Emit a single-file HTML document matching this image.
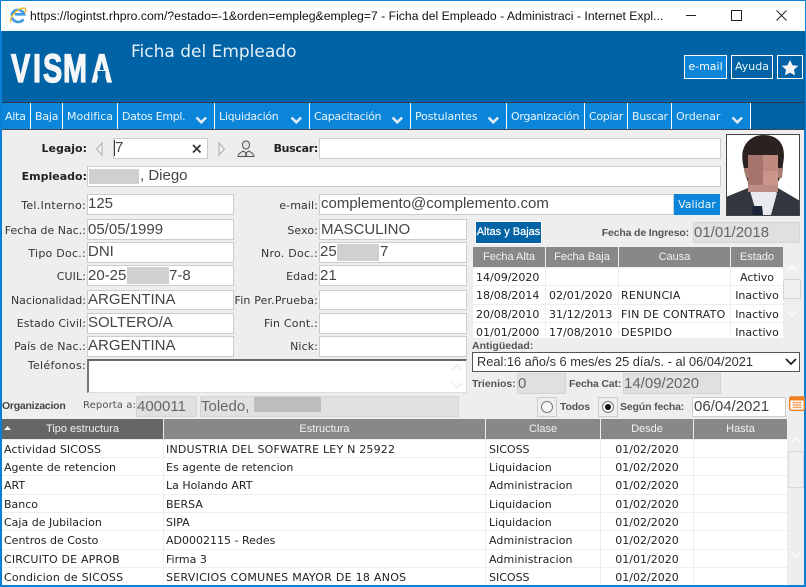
<!DOCTYPE html>
<html lang="es"><head><meta charset="utf-8"><title>Ficha del Empleado</title>
<style>
html,body{margin:0;padding:0;width:806px;height:587px;overflow:hidden;background:#eee}
body{position:relative;font:11px "DejaVu Sans",sans-serif;color:#222}
div,span,svg{position:absolute;box-sizing:border-box;white-space:nowrap}
.n{top:104px;height:26px;line-height:25px;color:#e8f4fc;font-size:11px;text-align:left;letter-spacing:-.2px}
.s{top:103px;width:1px;height:26px;background:#fff}
.l{text-align:right;line-height:16px;height:16px;color:#333}
.l:not(.b){margin-left:-1px;margin-top:1px;letter-spacing:.1px}
.b{font-weight:bold;color:#222}
.t{font:bold 10.5px/16px "Liberation Sans",sans-serif;color:#555;height:16px;letter-spacing:-.15px}
.f{background:#fff;border:1px solid #ccc;font:15px "Liberation Sans",sans-serif;color:#444;line-height:17px;padding-left:0;overflow:hidden}
.h{line-height:19px}
.o{line-height:18px}
.g{background:#e0e0e0;color:#666;border-color:#d4d4d4;line-height:19px}
.bl{background:#d0d0d0}
.th{background:#888;color:#f2f2f2;text-align:center;line-height:20px;height:20px;font:11px/20px "Liberation Sans",sans-serif}
.c{background:#fff;line-height:19px;color:#222;font-size:11px;overflow:hidden}
.u{letter-spacing:.27px}
</style></head><body>
<!-- window frame -->
<div style="left:0;top:0;width:806px;height:31px;background:#fff;border-top:1px solid #0a7fd6"></div>
<svg style="left:9px;top:7px" width="18" height="17" viewBox="0 0 18 17"><path d="M2.500 8.500a6.500 6.500 0 0 1 12.600-1.200H6M3 10.500a6.500 6.500 0 0 0 11.500 1.700" fill="none" stroke="#3d9be0" stroke-width="2.600"/><path d="M2 15.500C0 12 5 5 10 2.500 13 1 17 0 16.800 3c-.1 1-.6 2-1.300 3" fill="none" stroke="#eeb32d" stroke-width="1.300"/></svg>
<span style="left:30px;top:8px;font:12.2px/16px 'Liberation Sans',sans-serif;color:#111;letter-spacing:.02px">https://logintst.rhpro.com/?estado=-1&amp;orden=empleg&amp;empleg=7 - Ficha del Empleado - Administraci - Internet Expl...</span>
<div style="left:686px;top:15px;width:10px;height:1px;background:#222"></div>
<div style="left:731px;top:10px;width:11px;height:11px;border:1px solid #222"></div>
<svg style="left:776px;top:10px" width="11" height="11"><path d="M.5 .5l10 10M10.500 .5l-10 10" stroke="#222" fill="none"/></svg>
<!-- header -->
<div style="left:0;top:31px;width:806px;height:71px;background:#0063a6"></div>
<svg style="left:10px;top:50px" width="104" height="36"><g transform="scale(.72 1)"><text x="1.400 32 45.800 73.600 113" y="32" font-family="Liberation Sans" font-weight="bold" font-size="40" fill="#f4f6f8" stroke="#f4f6f8" stroke-width="1.300">VISMA</text></g><rect x="87.500" y="21" width="8" height="5" fill="#0063a6"/></svg>
<span style="left:131px;top:42px;font-size:17px;line-height:21px;color:#e6f0f8">Ficha del Empleado</span>
<div style="left:684px;top:55px;width:43px;height:24px;background:#0a85d9;border:1px solid #fff;color:#fff;text-align:center;line-height:21px">e-mail</div>
<div style="left:731px;top:55px;width:42px;height:24px;border:1px solid #fff;color:#eaf4fb;text-align:center;line-height:21px">Ayuda</div>
<div style="left:777px;top:55px;width:26px;height:24px;border:1px solid #fff"></div>
<svg style="left:781px;top:59px" width="18" height="17" viewBox="0 0 18 17"><path d="M9 1l2.500 5.200 5.700.7-4.200 3.900 1.100 5.600L9 13.600l-5.100 2.800L5 10.800.8 6.900l5.700-.7z" fill="#f4f4f4"/></svg>
<!-- nav -->
<div style="left:0;top:102px;width:806px;height:1px;background:#2b3a44"></div>
<div style="left:0;top:103px;width:750px;height:26px;background:#0a85d9"></div>
<div style="left:750px;top:103px;width:56px;height:26px;background:#0063a6"></div>
<div style="left:0;top:129px;width:806px;height:1px;background:#3a4a55"></div>
<span class="n" style="left:5px">Alta</span><div class="s" style="left:30px"></div>
<span class="n" style="left:35px">Baja</span><div class="s" style="left:62px"></div>
<span class="n" style="left:67px;letter-spacing:0">Modifica</span><div class="s" style="left:117px"></div>
<span class="n" style="left:122px;letter-spacing:-.3px">Datos Empl.</span><div class="s" style="left:214px"></div>
<span class="n" style="left:219px;letter-spacing:-.3px">Liquidación</span><div class="s" style="left:309px"></div>
<span class="n" style="left:314px;letter-spacing:-.33px">Capacitación</span><div class="s" style="left:410px"></div>
<span class="n" style="left:415px;letter-spacing:-.1px">Postulantes</span><div class="s" style="left:506px"></div>
<span class="n" style="left:511px;letter-spacing:-.33px">Organización</span><div class="s" style="left:584px"></div>
<span class="n" style="left:589px;letter-spacing:-.3px">Copiar</span><div class="s" style="left:627px"></div>
<span class="n" style="left:632px;letter-spacing:-.3px">Buscar</span><div class="s" style="left:671px"></div>
<span class="n" style="left:676px;letter-spacing:-.1px">Ordenar</span><div class="s" style="left:750px"></div>
<svg style="left:0;top:104px" width="806" height="26" fill="none" stroke="#dcebf6" stroke-width="2.600"><path d="M196.500 13.500l4.800 4.800 4.800-4.800M291.500 13.500l4.800 4.800 4.800-4.800M392.500 13.500l4.800 4.800 4.800-4.800M488.500 13.500l4.800 4.800 4.800-4.800M732.500 13.500l4.800 4.800 4.800-4.800"/></svg>
<!-- blue edges -->
<div style="left:0;top:0;width:1px;height:587px;background:#0a7fd6"></div>
<div style="left:1px;top:31px;width:1px;height:556px;background:#0a7fd6"></div>
<div style="left:804px;top:130px;width:2px;height:457px;background:#0a7fd6"></div>
<div style="left:805px;top:0;width:1px;height:130px;background:#0a7fd6"></div>
<div style="left:0;top:585px;width:806px;height:2px;background:#0a7fd6"></div>
<!-- legajo row -->
<span class="l b" style="left:2px;top:141px;width:85px">Legajo:</span>
<svg style="left:95px;top:141px" width="8" height="16"><path d="M7 2L1.500 8 7 14z" fill="#f4f4f4" stroke="#aaa"/></svg>
<div class="f" style="left:113px;top:138px;width:95px;height:21px;padding-left:1px;line-height:18px">7</div>
<div style="left:114px;top:140px;width:1px;height:16px;background:#333"></div>
<svg style="left:192px;top:144px" width="10" height="10"><path d="M1 1l7.500 7.500M8.500 1L1 8.500" stroke="#333" stroke-width="1.700" fill="none"/></svg>
<svg style="left:218px;top:141px" width="8" height="16"><path d="M1 2l5.500 6L1 14z" fill="#f4f4f4" stroke="#aaa"/></svg>
<svg style="left:237px;top:140px" width="18" height="18" viewBox="0 0 18 18"><path d="M5.500 4.500a3.500 3.500 0 0 1 7 0c0 2.500-1.300 4.500-3.500 4.500S5.500 7 5.500 4.500z" fill="#e4e4e4" stroke="#555"/><path d="M1 16.500c0-3 3-4.500 5.500-5.500L9 13l2.500-2c2.500 1 5.500 2.500 5.500 5.500z" fill="#e4e4e4" stroke="#555"/><path d="M9 13v3.500" stroke="#444" stroke-width="1.400"/></svg>
<span class="l b" style="left:250px;top:141px;width:68px;letter-spacing:-.3px">Buscar:</span>
<div class="f" style="left:319px;top:138px;width:402px;height:21px"></div>
<span class="l b" style="left:2px;top:169px;width:85px">Empleado:</span>
<div class="f" style="left:87px;top:166px;width:634px;height:21px;line-height:18px"><span style="left:52px;top:0">, Diego</span></div>
<div class="bl" style="left:89px;top:169px;width:50px;height:15px"></div>
<!-- left column -->
<span class="l" style="left:2px;top:197px;width:85px;letter-spacing:.3px">Tel.Interno:</span>
<div class="f" style="left:87px;top:194px;width:147px;height:21px">125</div>
<span class="l" style="left:0;top:222px;width:87px;letter-spacing:0">Fecha de Nac.:</span>
<div class="f h" style="left:87px;top:219px;width:147px;height:21px">05/05/1999</div>
<span class="l" style="left:2px;top:245px;width:85px;letter-spacing:.25px">Tipo Doc.:</span>
<div class="f" style="left:87px;top:242px;width:147px;height:21px">DNI</div>
<span class="l" style="left:2px;top:268px;width:85px">CUIL:</span>
<div class="f h" style="left:87px;top:265px;width:147px;height:21px">20-25<span style="left:81px;top:0">7-8</span></div>
<div class="bl" style="left:127px;top:267px;width:42px;height:17px"></div>
<span class="l" style="left:2px;top:292px;width:85px;letter-spacing:0">Nacionalidad:</span>
<div class="f o" style="left:87px;top:290px;width:147px;height:20px">ARGENTINA</div>
<span class="l" style="left:2px;top:315px;width:85px">Estado Civil:</span>
<div class="f o" style="left:87px;top:313px;width:147px;height:21px">SOLTERO/A</div>
<span class="l" style="left:2px;top:338px;width:85px">País de Nac.:</span>
<div class="f o" style="left:87px;top:336px;width:147px;height:21px">ARGENTINA</div>
<span class="l" style="left:2px;top:357px;width:85px;letter-spacing:.3px">Teléfonos:</span>
<div style="left:87px;top:359px;width:380px;height:34px;background:#fff;border:1px solid #ddd;border-top:2px solid #666;border-left:2px solid #777"></div>
<svg style="left:449px;top:361px" width="16" height="31" fill="none" stroke="#eceff2" stroke-width="2"><path d="M3 9l5-5 5 5M3 22l5 5 5-5"/></svg>
<!-- middle column -->
<span class="l" style="left:240px;top:197px;width:79px">e-mail:</span>
<div class="f" style="left:319px;top:194px;width:355px;height:21px;padding-left:1px">complemento@complemento.com</div>
<div style="left:674px;top:194px;width:46px;height:21px;background:#0a85d9;color:#f0f8fd;text-align:center;line-height:21px">Validar</div>
<span class="l" style="left:240px;top:222px;width:79px">Sexo:</span>
<div class="f h" style="left:319px;top:219px;width:148px;height:21px;padding-left:1px">MASCULINO</div>
<span class="l" style="left:240px;top:245px;width:79px;letter-spacing:.25px">Nro. Doc.:</span>
<div class="f" style="left:319px;top:242px;width:148px;height:21px">25<span style="left:60px;top:0">7</span></div>
<div class="bl" style="left:337px;top:244px;width:42px;height:17px"></div>
<span class="l" style="left:240px;top:268px;width:79px">Edad:</span>
<div class="f h" style="left:319px;top:265px;width:148px;height:21px">21</div>
<span class="l" style="left:230px;top:292px;width:89px;letter-spacing:.15px">Fin Per.Prueba:</span>
<div class="f" style="left:319px;top:290px;width:148px;height:20px"></div>
<span class="l" style="left:240px;top:315px;width:79px;letter-spacing:.2px">Fin Cont.:</span>
<div class="f" style="left:319px;top:313px;width:148px;height:21px"></div>
<span class="l" style="left:240px;top:338px;width:79px">Nick:</span>
<div class="f" style="left:319px;top:336px;width:148px;height:21px"></div>
<!-- photo -->
<svg style="left:726px;top:134px" width="74" height="82" viewBox="0 0 74 82">
<rect width="74" height="82" fill="#fff"/>
<path d="M0 82V63l22-9h30l22 13v15z" fill="#33363f"/>
<path d="M24 57l7 24h14l6-22-4-5H28z" fill="#e8eaf0"/>
<path d="M27 72h9l1 9H26z" fill="#1b2438"/>
<path d="M17 30C13 10 26 1 37 1c15 0 24 9 20 29l-1 10-4 8H22l-3-8z" fill="#2b211e"/>
<path d="M52 34h5l-1 10h-4zM18 34h4v10h-2z" fill="#a87c70"/>
<rect x="22" y="21" width="15" height="37" fill="#a6746c"/>
<rect x="37" y="21" width="15" height="16" fill="#be897e"/>
<rect x="37" y="37" width="15" height="21" fill="#c9948a"/>
<rect x="22" y="51" width="30" height="7" fill="#bb8d84"/>
<rect x=".5" y=".5" width="73" height="81" fill="none" stroke="#444"/>
</svg>
<!-- altas y bajas -->
<div style="left:475px;top:221px;width:67px;height:23px;background:#0063a6;border:1px solid #fff;color:#fff;text-align:center;font:11px/21px 'Liberation Sans',sans-serif;-webkit-text-stroke:.25px #fff">Altas y Bajas</div>
<span class="t" style="left:560px;top:225px;width:129px;text-align:right">Fecha de Ingreso:</span>
<div class="f g" style="left:693px;top:222px;width:107px;height:21px">01/01/2018</div>
<div class="th" style="left:473px;top:247px;width:72px">Fecha Alta</div>
<div class="th" style="left:546px;top:247px;width:72px">Fecha Baja</div>
<div class="th" style="left:619px;top:247px;width:111px">Causa</div>
<div class="th" style="left:731px;top:247px;width:52px">Estado</div>
<div class="c" style="left:473px;top:268px;width:72px;height:17px;padding-left:3px">14/09/2020</div>
<div class="c" style="left:546px;top:268px;width:72px;height:17px"></div>
<div class="c" style="left:619px;top:268px;width:111px;height:17px"></div>
<div class="c" style="left:731px;top:268px;width:52px;height:17px;text-align:center">Activo</div>
<div class="c" style="left:473px;top:286px;width:72px;height:18px;padding-left:3px">18/08/2014</div>
<div class="c" style="left:546px;top:286px;width:72px;height:18px;padding-left:3px">02/01/2020</div>
<div class="c u" style="left:619px;top:286px;width:111px;height:18px;padding-left:2px">RENUNCIA</div>
<div class="c" style="left:731px;top:286px;width:52px;height:18px;text-align:center">Inactivo</div>
<div class="c" style="left:473px;top:305px;width:72px;height:17px;padding-left:3px">20/08/2010</div>
<div class="c" style="left:546px;top:305px;width:72px;height:17px;padding-left:3px">31/12/2013</div>
<div class="c" style="left:619px;top:305px;width:111px;height:17px;padding-left:2px;letter-spacing:.25px">FIN DE CONTRATO</div>
<div class="c" style="left:731px;top:305px;width:52px;height:17px;text-align:center">Inactivo</div>
<div class="c" style="left:473px;top:323px;width:72px;height:15px;padding-left:3px">01/01/2000</div>
<div class="c" style="left:546px;top:323px;width:72px;height:15px;padding-left:3px">17/08/2010</div>
<div class="c u" style="left:619px;top:323px;width:111px;height:15px;padding-left:2px">DESPIDO</div>
<div class="c" style="left:731px;top:323px;width:52px;height:15px;text-align:center">Inactivo</div>
<svg style="left:783px;top:260px" width="18" height="70" fill="none" stroke="#f8f8f8" stroke-width="2.400"><path d="M4 11l5-5 5 5M4 51l5 5 5-5"/></svg>
<div style="left:783px;top:279px;width:18px;height:20px;background:#f0f0f0;border:1px solid #d4d4d4"></div>
<!-- antiguedad -->
<span class="t" style="left:472px;top:338px;letter-spacing:0">Antigüedad:</span>
<div style="left:472px;top:352px;width:328px;height:20px;background:#fff;border:1px solid #555;font:12.800px/18px 'Liberation Sans',sans-serif;color:#333;padding-left:4px">Real:16 año/s 6 mes/es 25 día/s. - al 06/04/2021</div>
<svg style="left:785px;top:358px" width="12" height="8"><path d="M1 1l5 5 5-5" stroke="#222" stroke-width="1.800" fill="none"/></svg>
<span class="t" style="left:472px;top:376px;letter-spacing:0">Trienios:</span>
<div class="f g" style="left:517px;top:373px;width:49px;height:21px">0</div>
<span class="t" style="left:569px;top:376px">Fecha Cat:</span>
<div class="f g" style="left:623px;top:373px;width:98px;height:21px">14/09/2020</div>
<!-- organizacion -->
<span class="t" style="left:2px;top:398px;color:#444;letter-spacing:-.25px">Organizacion</span>
<span class="l" style="left:61px;top:397px;width:76px;font-size:10px;color:#555">Reporta a:</span>
<div class="f g" style="left:136px;top:396px;width:61px;height:21px">400011</div>
<div class="f g" style="left:200px;top:396px;width:259px;height:21px">Toledo,</div>
<div class="bl" style="left:254px;top:397px;width:67px;height:15px;background:#bdbdbd"></div>
<div style="left:537px;top:397px;width:20px;height:20px;border:1px solid #ccc"></div>
<div style="left:541px;top:401px;width:12px;height:12px;border:1px solid #777;border-radius:50%;background:#f8f8f8"></div>
<span class="t" style="left:560px;top:399px">Todos</span>
<div style="left:598px;top:397px;width:20px;height:20px;border:1px solid #ccc"></div>
<div style="left:602px;top:401px;width:12px;height:12px;border:1px solid #777;border-radius:50%;background:#f8f8f8"></div>
<div style="left:605px;top:404px;width:6px;height:6px;border-radius:50%;background:#111"></div>
<span class="t" style="left:620px;top:399px">Según fecha:</span>
<div class="f" style="left:692px;top:397px;width:94px;height:20px;padding-left:1px;line-height:18px">06/04/2021</div>
<svg style="left:789px;top:395px" width="16" height="16" viewBox="0 0 16 16"><rect x=".7" y="2" width="14.600" height="13.300" rx="1.500" fill="#fff" stroke="#f08020" stroke-width="1.400"/><rect x="1" y="2" width="14" height="3.500" fill="#f08020"/><path d="M3 1v2M13 1v2" stroke="#f08020" stroke-width="1.500"/><path d="M3.500 7.500h9M3.500 10h9M3.500 12.500h9M5 6.500v7M8 6.500v7M11 6.500v7" stroke="#f4a060"/></svg>
<!-- table 2 head -->
<div class="th" style="left:2px;top:419px;width:161px;background:#666">Tipo estructura</div>
<svg style="left:4px;top:426px" width="7" height="5"><path d="M3.500 0L7 4H0z" fill="#f4f4f4"/></svg>
<div class="th" style="left:164px;top:419px;width:321px">Estructura</div>
<div class="th" style="left:486px;top:419px;width:114px">Clase</div>
<div class="th" style="left:601px;top:419px;width:92px">Desde</div>
<div class="th" style="left:694px;top:419px;width:93px">Hasta</div>
<svg style="left:787px;top:430px" width="18" height="150" fill="none" stroke="#f8f8f8" stroke-width="2.400"><path d="M4 13l5-5 5 5M4 122l5 5 5-5"/></svg>
<div style="left:788px;top:451px;width:16px;height:37px;background:#f0f0f0;border:1px solid #d8d8d8"></div>
<!-- table 2 rows -->
<div class="c" style="left:2px;top:440px;width:161px;height:17px;padding-left:2px;letter-spacing:.13px">Actividad SICOSS</div><div class="c" style="left:164px;top:440px;width:321px;height:17px;padding-left:2px;letter-spacing:.2px">INDUSTRIA DEL SOFWATRE LEY N 25922</div><div class="c" style="left:486px;top:440px;width:114px;height:17px;padding-left:3px">SICOSS</div><div class="c" style="left:601px;top:440px;width:92px;height:17px;text-align:center">01/02/2020</div><div class="c" style="left:694px;top:440px;width:93px;height:17px"></div>
<div class="c" style="left:2px;top:458px;width:161px;height:17px;padding-left:2px">Agente de retencion</div><div class="c" style="left:164px;top:458px;width:321px;height:17px;padding-left:2px">Es agente de retencion</div><div class="c" style="left:486px;top:458px;width:114px;height:17px;padding-left:3px">Liquidacion</div><div class="c" style="left:601px;top:458px;width:92px;height:17px;text-align:center">01/02/2020</div><div class="c" style="left:694px;top:458px;width:93px;height:17px"></div>
<div class="c" style="left:2px;top:476px;width:161px;height:18px;padding-left:2px">ART</div><div class="c" style="left:164px;top:476px;width:321px;height:18px;padding-left:2px">La Holando ART</div><div class="c" style="left:486px;top:476px;width:114px;height:18px;padding-left:3px;letter-spacing:.1px">Administracion</div><div class="c" style="left:601px;top:476px;width:92px;height:18px;text-align:center">01/02/2020</div><div class="c" style="left:694px;top:476px;width:93px;height:18px"></div>
<div class="c" style="left:2px;top:495px;width:161px;height:17px;padding-left:2px">Banco</div><div class="c" style="left:164px;top:495px;width:321px;height:17px;padding-left:2px">BERSA</div><div class="c" style="left:486px;top:495px;width:114px;height:17px;padding-left:3px">Liquidacion</div><div class="c" style="left:601px;top:495px;width:92px;height:17px;text-align:center">01/02/2020</div><div class="c" style="left:694px;top:495px;width:93px;height:17px"></div>
<div class="c" style="left:2px;top:513px;width:161px;height:17px;padding-left:2px">Caja de Jubilacion</div><div class="c" style="left:164px;top:513px;width:321px;height:17px;padding-left:2px">SIPA</div><div class="c" style="left:486px;top:513px;width:114px;height:17px;padding-left:3px">Liquidacion</div><div class="c" style="left:601px;top:513px;width:92px;height:17px;text-align:center">01/02/2020</div><div class="c" style="left:694px;top:513px;width:93px;height:17px"></div>
<div class="c" style="left:2px;top:531px;width:161px;height:18px;padding-left:2px">Centros de Costo</div><div class="c" style="left:164px;top:531px;width:321px;height:18px;padding-left:2px">AD0002115 - Redes</div><div class="c" style="left:486px;top:531px;width:114px;height:18px;padding-left:3px;letter-spacing:.1px">Administracion</div><div class="c" style="left:601px;top:531px;width:92px;height:18px;text-align:center">01/02/2020</div><div class="c" style="left:694px;top:531px;width:93px;height:18px"></div>
<div class="c" style="left:2px;top:550px;width:161px;height:17px;padding-left:2px;letter-spacing:.18px">CIRCUITO DE APROB</div><div class="c" style="left:164px;top:550px;width:321px;height:17px;padding-left:2px">Firma 3</div><div class="c" style="left:486px;top:550px;width:114px;height:17px;padding-left:3px;letter-spacing:.1px">Administracion</div><div class="c" style="left:601px;top:550px;width:92px;height:17px;text-align:center">01/01/2020</div><div class="c" style="left:694px;top:550px;width:93px;height:17px"></div>
<div class="c" style="left:2px;top:568px;width:161px;height:17px;padding-left:2px;letter-spacing:.2px">Condicion de SICOSS</div><div class="c" style="left:164px;top:568px;width:321px;height:17px;padding-left:2px;letter-spacing:.27px">SERVICIOS COMUNES MAYOR DE 18 ANOS</div><div class="c" style="left:486px;top:568px;width:114px;height:17px;padding-left:3px">SICOSS</div><div class="c" style="left:601px;top:568px;width:92px;height:17px;text-align:center">01/02/2020</div><div class="c" style="left:694px;top:568px;width:93px;height:17px"></div>
</body></html>
